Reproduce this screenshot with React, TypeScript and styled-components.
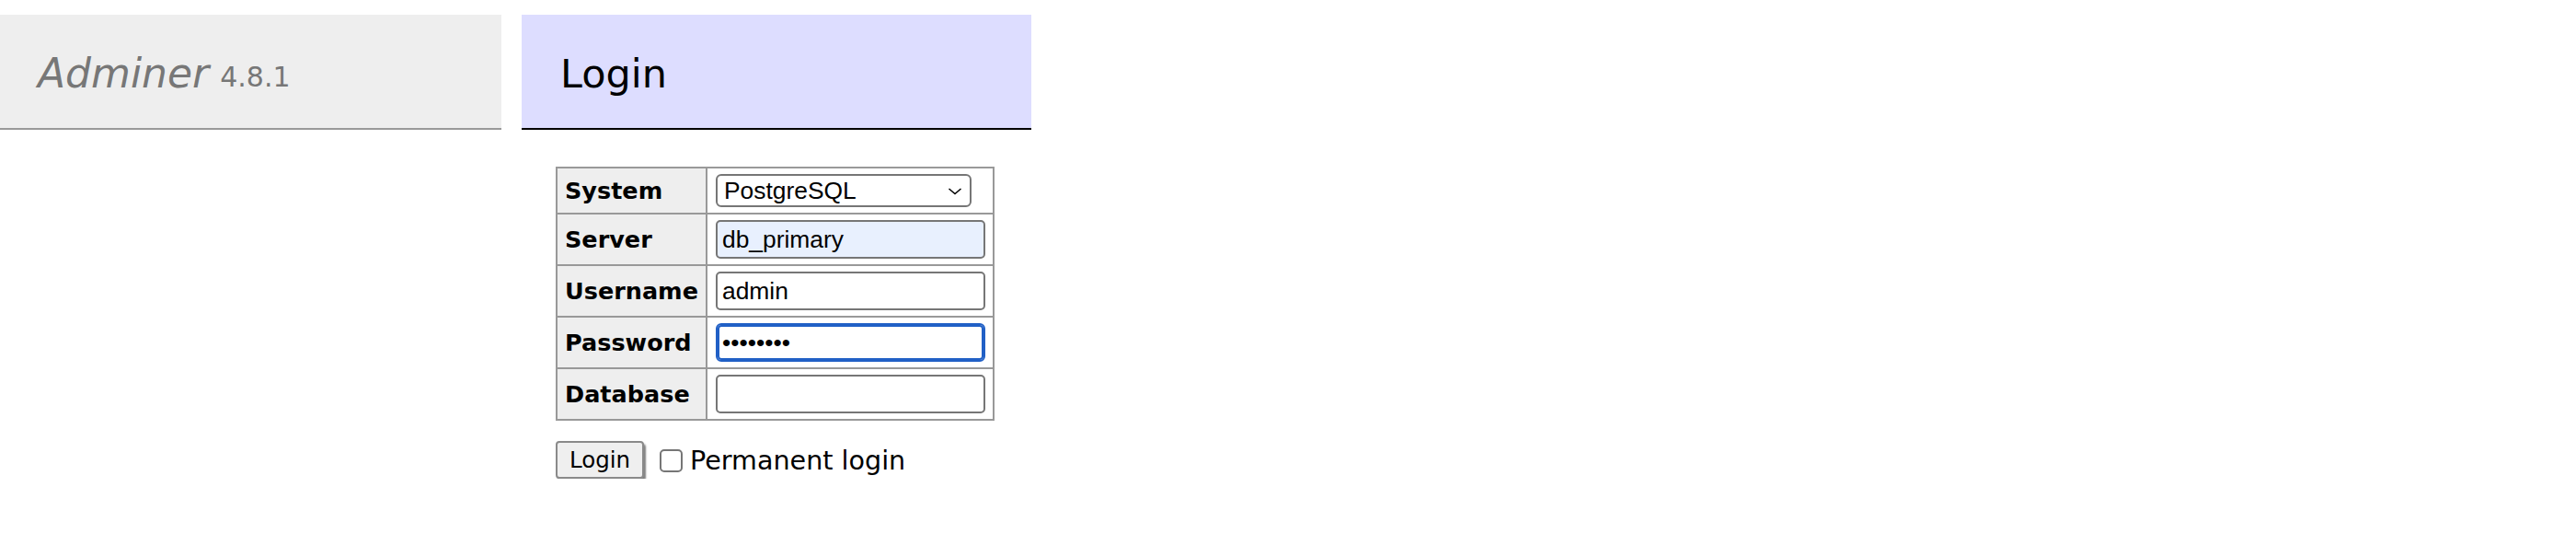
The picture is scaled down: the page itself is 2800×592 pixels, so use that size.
import React from 'react';
import styled, { createGlobalStyle } from 'styled-components';

const GlobalStyle = createGlobalStyle`
  html, body {
    margin: 0;
    padding: 0;
    background: #fff;
  }
  body {
    font-family: "DejaVu Sans", Verdana, sans-serif;
    color: #000;
  }
`;

const Page = styled.div`
  display: flex;
  align-items: flex-start;
  padding-top: 16px;
`;

const Menu = styled.div`
  flex: none;
  width: 545px;
`;

const Content = styled.div`
  flex: none;
  width: 554px;
  margin-left: 22px;
`;

const Title = styled.h1`
  margin: 0;
  height: 125px;
  box-sizing: border-box;
  display: flex;
  align-items: center;
  gap: 12px;
  padding: 4px 0 0 41px;
  background: #eee;
  border-bottom: 2px solid #999;
  font-weight: normal;
  font-size: 44px;
  color: #777;
`;

const TitleLink = styled.a`
  color: #777;
  font-style: italic;
  text-decoration: none;
`;

const Version = styled.span`
  font-size: 30px;
  color: #777;
  padding-top: 8px;
`;

const Heading = styled.h2`
  margin: 0;
  height: 125px;
  box-sizing: border-box;
  display: flex;
  align-items: center;
  padding: 4px 0 0 42px;
  background: #ddf;
  border-bottom: 2px solid #000;
  font-weight: normal;
  font-size: 43px;
  color: #000;
`;

const Form = styled.form`
  margin: 40px 0 0 37px;
`;

const LoginTable = styled.table`
  border-collapse: collapse;
  border: 2px solid #999;
`;

const Label = styled.th`
  background: #eee;
  border: 2px solid #999;
  padding: 0 8px;
  width: 143px;
  text-align: left;
  vertical-align: middle;
  font-size: 25.5px;
  font-weight: bold;
  white-space: nowrap;
`;

const Cell = styled.td`
  border: 2px solid #999;
  padding: 6px 8px 6px 9px;
  vertical-align: middle;
`;

const SelectWrap = styled.div`
  position: relative;
  width: 278px;
  height: 36px;
`;

const Select = styled.select`
  appearance: none;
  -webkit-appearance: none;
  display: block;
  box-sizing: border-box;
  width: 100%;
  height: 100%;
  margin: 0;
  padding: 0 0 0 7px;
  border: 2px solid #767676;
  border-radius: 6px;
  background: #fff;
  color: #000;
  font-family: "Liberation Sans", Arial, sans-serif;
  font-size: 26.4px;
  outline: none;
`;

const Chevron = styled.svg`
  position: absolute;
  right: 10px;
  top: 15px;
  pointer-events: none;
`;

const TextInput = styled.input<{ $autofill?: boolean; $focused?: boolean }>`
  display: block;
  box-sizing: border-box;
  width: 293px;
  height: 42px;
  margin: 0;
  padding: 0 5px;
  border: 2px solid #767676;
  border-radius: 5px;
  background: ${(p) => (p.$autofill ? '#e8f0fe' : '#fff')};
  color: #000;
  font-family: "Liberation Sans", Arial, sans-serif;
  font-size: 26.4px;
  outline: none;
  ${(p) =>
    p.$focused &&
    `
    border: 2px solid #2160c6;
    box-shadow: inset 0 0 0 2px #2160c6;
    border-radius: 6px;
  `}
`;

const Footer = styled.div`
  display: flex;
  align-items: center;
  margin-top: 22px;
`;

const SubmitButton = styled.button`
  box-sizing: border-box;
  width: 96px;
  height: 41px;
  margin: 0;
  padding: 0;
  border: 2px solid #8a8a8a;
  border-radius: 4px;
  background: #efefef;
  color: #000;
  font-family: "DejaVu Sans", Verdana, sans-serif;
  font-size: 24.5px;
  box-shadow: 2px 3px 2px rgba(0, 0, 0, 0.5);
`;

const CheckLabel = styled.label`
  display: flex;
  align-items: center;
  margin-left: 17px;
  font-size: 28.6px;
  gap: 8px;
`;

const CheckBox = styled.input`
  appearance: none;
  -webkit-appearance: none;
  box-sizing: border-box;
  width: 25px;
  height: 25px;
  margin: 2px 0 0 0;
  border: 2px solid #767676;
  border-radius: 5px;
  background: #fff;
`;

type Row = {
  label: string;
  kind: 'select' | 'text' | 'password';
  value?: string;
  autofill?: boolean;
  focused?: boolean;
};

const rows: Row[] = [
  { label: 'System', kind: 'select', value: 'PostgreSQL' },
  { label: 'Server', kind: 'text', value: 'db_primary', autofill: true },
  { label: 'Username', kind: 'text', value: 'admin' },
  { label: 'Password', kind: 'password', value: 'password', focused: true },
  { label: 'Database', kind: 'text', value: '' },
];

export default function App() {
  return (
    <>
      <GlobalStyle />
      <Page>
        <Menu>
          <Title>
            <TitleLink href="#">Adminer</TitleLink>
            <Version>4.8.1</Version>
          </Title>
        </Menu>
        <Content>
          <Heading>Login</Heading>
          <Form onSubmit={(e) => e.preventDefault()}>
            <LoginTable>
              <tbody>
                {rows.map((r) => (
                  <tr key={r.label}>
                    <Label>{r.label}</Label>
                    <Cell>
                      {r.kind === 'select' ? (
                        <SelectWrap>
                          <Select defaultValue={r.value}>
                            <option>MySQL</option>
                            <option>SQLite 3</option>
                            <option>PostgreSQL</option>
                            <option>Oracle (beta)</option>
                            <option>MS SQL (beta)</option>
                          </Select>
                          <Chevron width="16" height="8" viewBox="0 0 16 8">
                            <path d="M1.5 1 L8 6.5 L14.5 1" fill="none" stroke="#000" strokeWidth="1.5" />
                          </Chevron>
                        </SelectWrap>
                      ) : (
                        <TextInput
                          type={r.kind === 'password' ? 'password' : 'text'}
                          defaultValue={r.value}
                          $autofill={r.autofill}
                          $focused={r.focused}
                        />
                      )}
                    </Cell>
                  </tr>
                ))}
              </tbody>
            </LoginTable>
            <Footer>
              <SubmitButton type="submit">Login</SubmitButton>
              <CheckLabel>
                <CheckBox type="checkbox" />
                Permanent login
              </CheckLabel>
            </Footer>
          </Form>
        </Content>
      </Page>
    </>
  );
}
